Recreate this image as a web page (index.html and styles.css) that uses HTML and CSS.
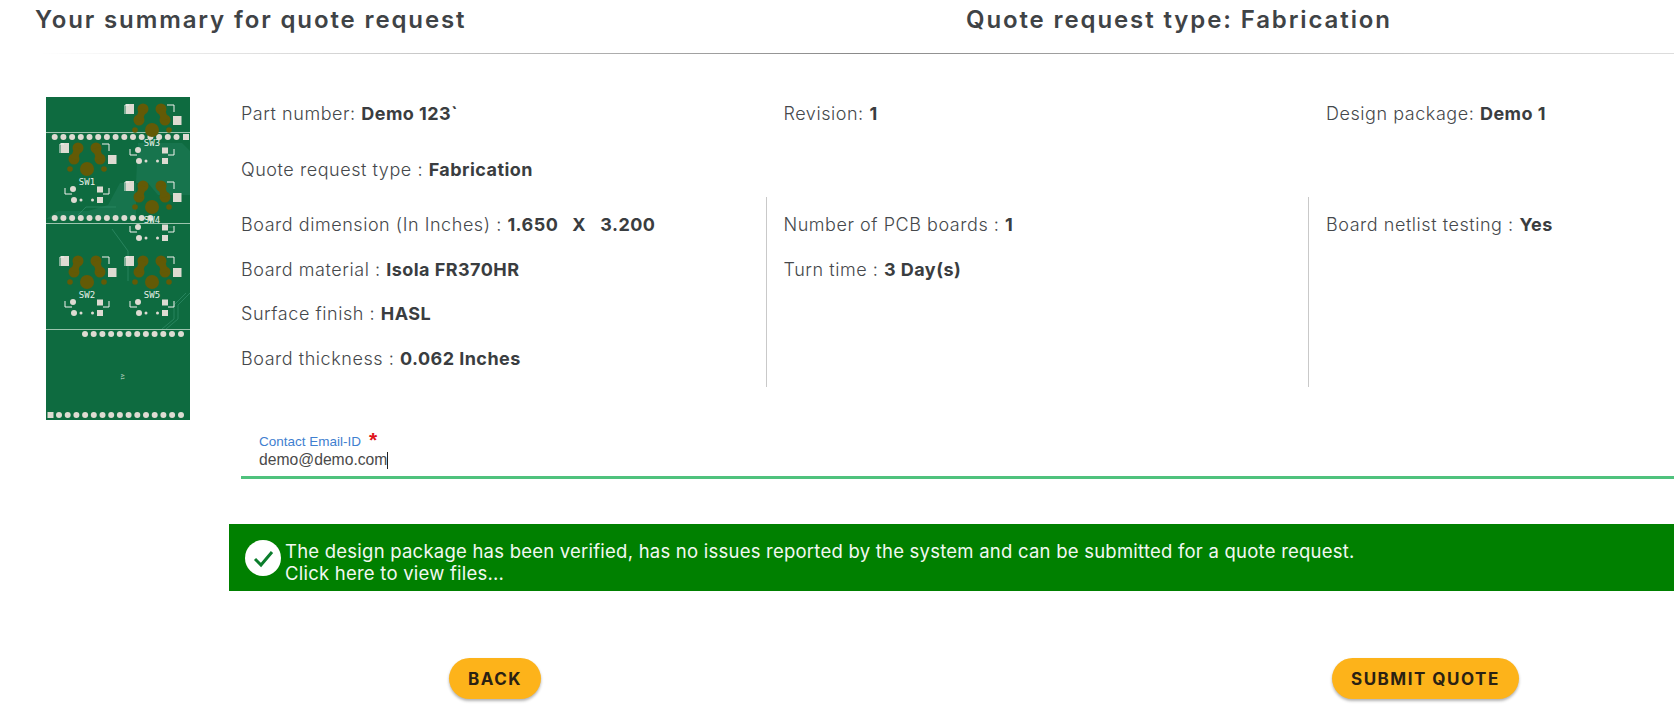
FILE: index.html
```html
<!DOCTYPE html>
<html lang="en">
<head>
<meta charset="utf-8">
<title>Quote summary</title>
<link rel="stylesheet" href="styles.css">
</head>
<body>
<header class="head">
  <h1 class="title">Your summary for quote request</h1>
  <h2 class="title">Quote request type: Fabrication</h2>
</header>
<div class="rule"></div>
<main class="main">
  <div class="board-col">
    <svg class="board" viewBox="0 0 144 323" width="144" height="323" aria-label="PCB preview">
      <defs>
        <g id="sw">
          <g fill="#635a06">
            <circle cx="-9" cy="-21" r="5.5"/><circle cx="9" cy="-21" r="5.5"/>
            <circle cx="-13" cy="-10" r="5.5"/><circle cx="13" cy="-10" r="5.5"/>
            <path d="M-9-21L-13-10M9-21L13-10" stroke="#635a06" stroke-width="7"/>
            <circle cx="0" cy="0" r="7"/><circle cx="-17" cy="0" r="2.8"/><circle cx="17" cy="0" r="2.8"/>
          </g>
          <g fill="#dedbd2">
            <rect x="-26" y="-26" width="8" height="10"/>
            <rect x="21" y="-14" width="8.5" height="9"/>
            <circle cx="-14" cy="20" r="3"/><rect x="10" y="17.500" width="6" height="6"/>
            <circle cx="-13" cy="31" r="3"/><circle cx="-6" cy="31" r="1.500"/>
            <circle cx="5.500" cy="31" r="1.500"/><rect x="10" y="28" width="6" height="6"/>
          </g>
          <path d="M-23-25h-4v9M15-25h7v7M-22 19v6h7M22 19v6h-6" fill="none" stroke="#f2f2ee" stroke-width="1"/>
        </g>
        <g id="hole"><circle cx="0" cy="0" r="3" fill="#dedbd2"/></g>
      </defs>
      <rect class="pcb" width="144" height="323"/>
      <path class="copper" d="M92 46h44l8 8v44h-32l-10-12H90zM0 122l12-8h30l20-6 12-22 16 0v36H0z"/>
      <path class="trace" d="M118 130l10 0M66 132l16 22v30M144 196l-12 12v14l-12 10M140 196l-12 12v14l-12 10M32 118l8-8h30"/>
      <path class="edge" d="M0 35.500h144M0 126.500h144M0 232.500h144"/>
      <g>
        <use href="#hole" x="8.700" y="40"/><use href="#hole" x="17.400" y="40"/><use href="#hole" x="26.100" y="40"/><use href="#hole" x="34.800" y="40"/><use href="#hole" x="43.500" y="40"/><use href="#hole" x="52.200" y="40"/><use href="#hole" x="60.900" y="40"/><use href="#hole" x="69.600" y="40"/><use href="#hole" x="78.300" y="40"/><use href="#hole" x="87" y="40"/><use href="#hole" x="95.700" y="40"/><use href="#hole" x="104.400" y="40"/><use href="#hole" x="113.100" y="40"/><use href="#hole" x="121.800" y="40"/><use href="#hole" x="130.500" y="40"/>
        <rect class="pad" x="137" y="37" width="6" height="6"/>
        <use href="#hole" x="8.700" y="121"/><use href="#hole" x="17.400" y="121"/><use href="#hole" x="26.100" y="121"/><use href="#hole" x="34.800" y="121"/><use href="#hole" x="43.500" y="121"/><use href="#hole" x="52.200" y="121"/><use href="#hole" x="60.900" y="121"/><use href="#hole" x="69.600" y="121"/><use href="#hole" x="78.300" y="121"/><use href="#hole" x="87" y="121"/><use href="#hole" x="95.700" y="121"/><use href="#hole" x="104.400" y="121"/>
        <use href="#hole" x="39" y="237"/><use href="#hole" x="47.700" y="237"/><use href="#hole" x="56.400" y="237"/><use href="#hole" x="65.100" y="237"/><use href="#hole" x="73.800" y="237"/><use href="#hole" x="82.500" y="237"/><use href="#hole" x="91.200" y="237"/><use href="#hole" x="99.900" y="237"/><use href="#hole" x="108.600" y="237"/><use href="#hole" x="117.300" y="237"/><use href="#hole" x="126" y="237"/><use href="#hole" x="135" y="237"/>
        <rect class="pad" x="1.500" y="315" width="6" height="6"/>
        <use href="#hole" x="13" y="318"/><use href="#hole" x="21.700" y="318"/><use href="#hole" x="30.400" y="318"/><use href="#hole" x="39.100" y="318"/><use href="#hole" x="47.800" y="318"/><use href="#hole" x="56.500" y="318"/><use href="#hole" x="65.200" y="318"/><use href="#hole" x="73.900" y="318"/><use href="#hole" x="82.600" y="318"/><use href="#hole" x="91.300" y="318"/><use href="#hole" x="100" y="318"/><use href="#hole" x="108.700" y="318"/><use href="#hole" x="117.400" y="318"/><use href="#hole" x="126.100" y="318"/><use href="#hole" x="135" y="318"/>
      </g>
      <use href="#sw" x="41" y="72"/><use href="#sw" x="106" y="33"/><use href="#sw" x="106" y="110"/><use href="#sw" x="41" y="185"/><use href="#sw" x="106" y="185"/>
      <g class="silk">
        <text x="41" y="88">SW1</text><text x="106" y="49">SW3</text><text x="106" y="126">SW4</text><text x="41" y="201">SW2</text><text x="106" y="201">SW5</text>
      </g>
      <text class="silk-small" transform="translate(75 277) rotate(90)">A1</text>
    </svg>
  </div>
  <div class="content">
    <div class="row-top">
      <p class="cell">Part number: <b>Demo 123`</b></p>
      <p class="cell">Revision: <b>1</b></p>
      <p class="cell">Design package: <b>Demo 1</b></p>
    </div>
    <div class="row-top">
      <p class="cell">Quote request type : <b>Fabrication</b></p>
    </div>
    <div class="specs">
      <div class="spec-col">
        <p class="spec">Board dimension (In Inches) : <b>1.650 &nbsp; X &nbsp; 3.200</b></p>
        <p class="spec">Board material : <b>Isola FR370HR</b></p>
        <p class="spec">Surface finish : <b>HASL</b></p>
        <p class="spec">Board thickness : <b>0.062 Inches</b></p>
      </div>
      <div class="spec-col">
        <p class="spec">Number of PCB boards : <b>1</b></p>
        <p class="spec">Turn time : <b>3 Day(s)</b></p>
      </div>
      <div class="spec-col">
        <p class="spec">Board netlist testing : <b>Yes</b></p>
      </div>
    </div>
    <div class="field">
      <div class="field-label">Contact Email-ID <span class="req">*</span></div>
      <div class="field-value">demo@demo.com<span class="caret"></span></div>
    </div>
    <div class="notice">
      <svg class="notice-icon" viewBox="0 0 36 36" width="36" height="36" aria-hidden="true">
        <circle cx="18" cy="18" r="18" fill="#fff"/>
        <path d="M10 19l6 6 11-13" fill="none" stroke="#0b7d2c" stroke-width="3"/>
      </svg>
      <p class="notice-text">The design package has been verified, has no issues reported by the system and can be submitted for a quote request.<br>Click here to view files...</p>
    </div>
    <div class="actions">
      <button class="btn" type="button">BACK</button>
      <button class="btn" type="button">SUBMIT QUOTE</button>
    </div>
  </div>
</main>
</body>
</html>
```
FILE: styles.css
```css
* { box-sizing: border-box; }
html, body { margin: 0; height: 710px; overflow: hidden; background: #fff; }
body { font-family: Inter, "Noto Sans", sans-serif; color: #3a3d40; }
p, h1, h2 { margin: 0; }

.head { display: grid; grid-template-columns: 931px 1fr; height: 38px; padding-left: 35px; align-items: center; }
.title { font-size: 24px; font-weight: 600; letter-spacing: 1.88px; color: #3f4346; white-space: nowrap; }

.rule {
  height: 1px;
  margin-top: 15px;
  margin-left: 40px;
  background: linear-gradient(to right, #fff 0%, #8a8a8a 50%, #ddd 100%);
}

.main { display: flex; margin-top: 31px; }
.board-col { width: 224px; padding: 12px 0 0 46px; flex: none; }
.board { display: block; }
.pcb { fill: #0e6b40; }
.copper { fill: #17744d; }
.trace { fill: none; stroke: #2f8a66; stroke-width: .8; }
.edge { fill: none; stroke: #9cc4ae; stroke-width: 1; }
.pad { fill: #dedbd2; }
.silk text { font-family: "DejaVu Sans Mono", monospace; font-size: 9px; fill: #e8f0ea; text-anchor: middle; }
.silk-small { font-family: "DejaVu Sans", sans-serif; font-size: 4.5px; fill: #d5e3da; }

.content { flex: 1; min-width: 0; }
.row-top { display: grid; grid-template-columns: 542.5px 542.5px 1fr; height: 56px; align-items: center; }
.cell { padding-left: 17px; }
.cell, .spec { font-size: 18px; font-weight: 300; letter-spacing: .55px; white-space: nowrap; color: #45484b; }
.cell b, .spec b { font-weight: 700; letter-spacing: .45px; color: #3a3d40; }

.specs { display: grid; grid-template-columns: 542.5px 542.5px 1fr; height: 190px; }
.spec-col { padding: 6px 0 0 17px; border-right: 1px solid #c9c9c9; }
.spec-col:last-child { border-right: 0; }
.spec { height: 44.67px; line-height: 44.67px; }

.field { margin: 46px 0 0 17px; border-bottom: 3px solid #4fc27d; height: 46px; padding-left: 18px; font-family: "Liberation Sans", Arial, sans-serif; }
.field-label { font-size: 13.5px; line-height: 18px; color: #3f7fd0; display: flex; gap: 8px; }
.req { color: #e0141c; font-size: 21px; font-weight: 700; line-height: 14px; }
.field-value { font-size: 15.7px; line-height: 18px; color: #4a4a4a; display: flex; align-items: center; }
.caret { width: 1px; height: 17px; background: #222; }

.notice { display: flex; align-items: center; margin: 45px 0 0 5px; height: 67px; padding-left: 16px; gap: 4px; background: #008000; color: #fff; }
.notice-icon { flex: none; }
.notice-text { font-size: 18.5px; line-height: 21.5px; letter-spacing: .23px; padding-top: 10px; white-space: nowrap; color: #f2f8f2; }

.actions { display: flex; gap: 791px; margin: 67px 0 0 225px; }
.btn {
  height: 41px;
  padding: 0 19px;
  border: 0;
  border-radius: 21px;
  background: #fdb31a;
  box-shadow: 0 2px 3px rgba(0, 0, 0, .3);
  font-family: Inter, sans-serif;
  font-size: 17px;
  font-weight: 700;
  letter-spacing: 1.5px;
  color: #2a2113;
  white-space: nowrap;
}
```
